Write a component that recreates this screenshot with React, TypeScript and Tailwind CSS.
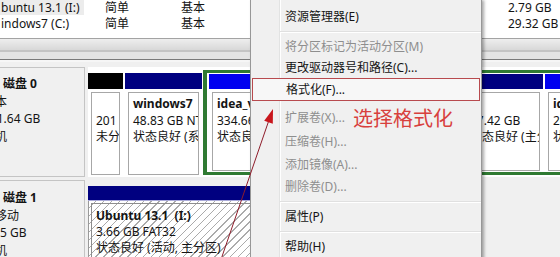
import React from "react";

type MenuEntry =
  | { kind: "sep"; h: string }
  | { kind: "item"; label: string; disabled?: boolean; h: string; active?: boolean; extra?: string };

const menu: MenuEntry[] = [
  { kind: "item", label: "资源管理器(E)", h: "h-[22px]" },
  { kind: "sep", h: "h-[8px]" },
  { kind: "item", label: "将分区标记为活动分区(M)", disabled: true, h: "h-[22px]" },
  { kind: "item", label: "更改驱动器号和路径(C)...", h: "h-[20px]" },
  { kind: "item", label: "格式化(F)...", h: "h-[23px]", active: true },
  { kind: "item", label: "扩展卷(X)...", disabled: true, h: "h-[29px]", extra: "pt-[5px]" },
  { kind: "item", label: "压缩卷(H)...", disabled: true, h: "h-[23px]" },
  { kind: "item", label: "添加镜像(A)...", disabled: true, h: "h-[23px]" },
  { kind: "item", label: "删除卷(D)...", disabled: true, h: "h-[22px]" },
  { kind: "sep", h: "h-[8px]" },
  { kind: "item", label: "属性(P)", h: "h-[22px]" },
  { kind: "sep", h: "h-[8px]" },
  { kind: "item", label: "帮助(H)", h: "h-[22px]" },
];

function DiskLabel({ title, lines, className }: { title: string; lines: string[]; className: string }) {
  return (
    <div className={`w-[85px] shrink-0 overflow-hidden bg-[#f0f0f0] border-r border-y border-[#c4c4c4] leading-[17.5px] whitespace-nowrap ${className}`}>
      <div className="pl-[3px] font-bold">{title}</div>
      {lines.map((l, i) => (
        <div key={i} className="ml-[-17px]">
          {l}
        </div>
      ))}
    </div>
  );
}

function Part({
  width,
  header,
  lines,
  bold,
  headerH = "h-[16px]",
  bodyPb = "pb-0",
}: {
  width: string;
  header: string;
  lines: string[];
  bold?: boolean;
  headerH?: string;
  bodyPb?: string;
}) {
  return (
    <div className={`flex flex-col shrink-0 h-full ${width}`}>
      <div className={`${headerH} ${header} shrink-0`} />
      <div className={`flex-1 min-h-0 pt-[3px] px-[3px] ${bodyPb} bg-white`}>
        <div className="h-full border border-[#a7a7a7] bg-white pl-[4px] pt-[3px] overflow-hidden whitespace-nowrap leading-[16.5px]">
          {lines.map((l, i) => (
            <div key={i} className={i === 0 && bold ? "font-bold" : ""}>
              {l === "" ? "\u00a0" : l}
            </div>
          ))}
        </div>
      </div>
    </div>
  );
}

export default function App() {
  return (
    <div className="relative w-[560px] h-[257px] overflow-hidden bg-[#f0f0f0] text-[12px] leading-none text-[#141414] font-['Noto_Sans','Noto_Sans_CJK_SC',sans-serif]">
      {/* volume list */}
      <div className="h-[39px] bg-white border-b border-[#a3a3a3] whitespace-nowrap">
        <div className="flex h-[15px] items-center">
          <div className="w-[84px] h-full bg-[#ececec] flex items-center pl-[1px] overflow-hidden">buntu 13.1 (I:)</div>
          <div className="ml-[21px] w-[76px]">简单</div>
          <div className="w-[100px]">基本</div>
          <div className="ml-auto w-[52px]">2.79 GB</div>
        </div>
        <div className="flex h-[18px] items-center">
          <div className="w-[84px] pl-[1px] overflow-hidden">indows7 (C:)</div>
          <div className="ml-[21px] w-[76px]">简单</div>
          <div className="w-[100px]">基本</div>
          <div className="ml-auto w-[52px]">29.32 GB</div>
        </div>
      </div>

      {/* splitter */}
      <div className="h-[23px] flex flex-col">
        <div className="h-[11px] bg-gradient-to-b from-[#eeeeee] to-[#d8d8d8]" />
        <div className="h-[2px] bg-[#c4c4c4]" />
        <div className="h-[7px] bg-[#e4e4e4]" />
        <div className="h-[1px] bg-[#7a7a7a]" />
        <div className="h-[2px] bg-[#f6f6f6]" />
      </div>

      {/* disk 0 */}
      <div className="mt-[5px] flex h-[110px]">
        <DiskLabel title="磁盘 0" lines={["基本", "931.64 GB", "联机"]} className="pt-[7px]" />
        <div className="ml-[3px] flex-1 min-w-0 bg-white flex items-start pt-[3px] overflow-hidden">
          <div className="mt-[3px] h-[102px] flex">
            <Part width="w-[35px]" header="bg-black" lines={["", "201 MB", "未分配"]} />
            <div className="w-[2px]" />
            <Part width="w-[77px]" header="bg-[#000080]" lines={["windows7", "48.83 GB NTFS", "状态良好 (系统, 启动)"]} bold />
          </div>
          <div className="ml-[1px] h-[105px] shrink-0 flex border-[#2f7a32] border-t-[3px] border-b-[3px] border-l-[4px] border-r-[3px] pl-[2px] pt-[1px]">
            <Part width="w-[251px]" header="bg-[#0000f0]" headerH="h-[15px]" lines={["idea_v", "334.66 GB NTFS", "状态良好 (逻辑驱动器)"]} bold bodyPb="pb-[1px]" />
            <div className="w-[2px]" />
            <Part width="w-[81px]" header="bg-[#000080]" headerH="h-[15px]" lines={["", "97.42 GB", "状态良好 (主分区)"]} bodyPb="pb-[1px]" />
            <div className="w-[2px]" />
            <Part width="w-[100px]" header="bg-[#0000f0]" headerH="h-[15px]" lines={["idea", "200.00 GB NTFS", "状态良好 (逻辑驱动器)"]} bold bodyPb="pb-[1px]" />
          </div>
        </div>
      </div>

      {/* disk 1 */}
      <div className="mt-[3px] flex h-[90px]">
        <DiskLabel title="磁盘 1" lines={["可移动", "3.75 GB", "联机"]} className="pt-[8px]" />
        <div className="ml-[3px] flex-1 min-w-0 flex items-start pt-[6px]">
          <div className="w-[312px] h-full flex flex-col">
            <div className="h-[14px] bg-[#000080]" />
            <div className="h-[1px] bg-[#a9a9d9]" />
            <div className="flex-1 pl-[2px] pt-[2px] bg-[repeating-linear-gradient(135deg,#ffffff_0px,#ffffff_4.6px,#ababab_4.6px,#ababab_5.6px)] border-l border-[#9a9a9a]">
              <div className="h-full border-l border-t border-[#8d8d8d] pl-[4px] pt-[4px] leading-[16px] whitespace-nowrap">
                <div className="font-bold">Ubuntu 13.1&nbsp;&nbsp;(I:)</div>
                <div>3.66 GB FAT32</div>
                <div>状态良好 (活动, 主分区)</div>
              </div>
            </div>
          </div>
        </div>
      </div>

      {/* context menu */}
      <div className="absolute left-[250px] top-[-2px] w-[232px] h-[275px] bg-[#f0f0f0] border border-[#979797] shadow-[2px_2px_3px_rgba(0,0,0,0.35)] pt-[7px]">
        <div className="absolute left-[28px] top-0 bottom-0 w-[1px] bg-[#e2e3e3]" />
        <div className="absolute left-[29px] top-0 bottom-0 w-[1px] bg-white" />
        {menu.map((m, i) =>
          m.kind === "sep" ? (
            <div key={i} className={`${m.h} relative flex flex-col justify-center pl-[29px]`}>
              <div className="h-[1px] bg-[#e0e0e0]" />
              <div className="h-[1px] bg-white" />
            </div>
          ) : (
            <div
              key={i}
              className={`${m.h} ${m.extra ?? ""} relative flex items-center whitespace-nowrap ${
                m.active ? "mx-[1px] border border-[#b84a4e] bg-[#f7f7f7] pl-[33px]" : "pl-[34px]"
              } ${m.disabled ? "text-[#8e8e8e]" : "text-[#151515]"}`}
            >
              {m.label}
            </div>
          )
        )}
      </div>

      {/* annotation */}
      <div className="absolute left-[353px] top-[109px] text-[20px] leading-[20px] text-[#d8403d] whitespace-nowrap">选择格式化</div>
      <svg className="absolute left-0 top-0 pointer-events-none" width="560" height="257" viewBox="0 0 560 257">
        <line x1="221.5" y1="258" x2="269" y2="120" stroke="#8e1c2a" strokeWidth="1" />
        <polygon points="273,109 272.8,123.7 264.2,120.7" fill="#c8161c" />
      </svg>
    </div>
  );
}
